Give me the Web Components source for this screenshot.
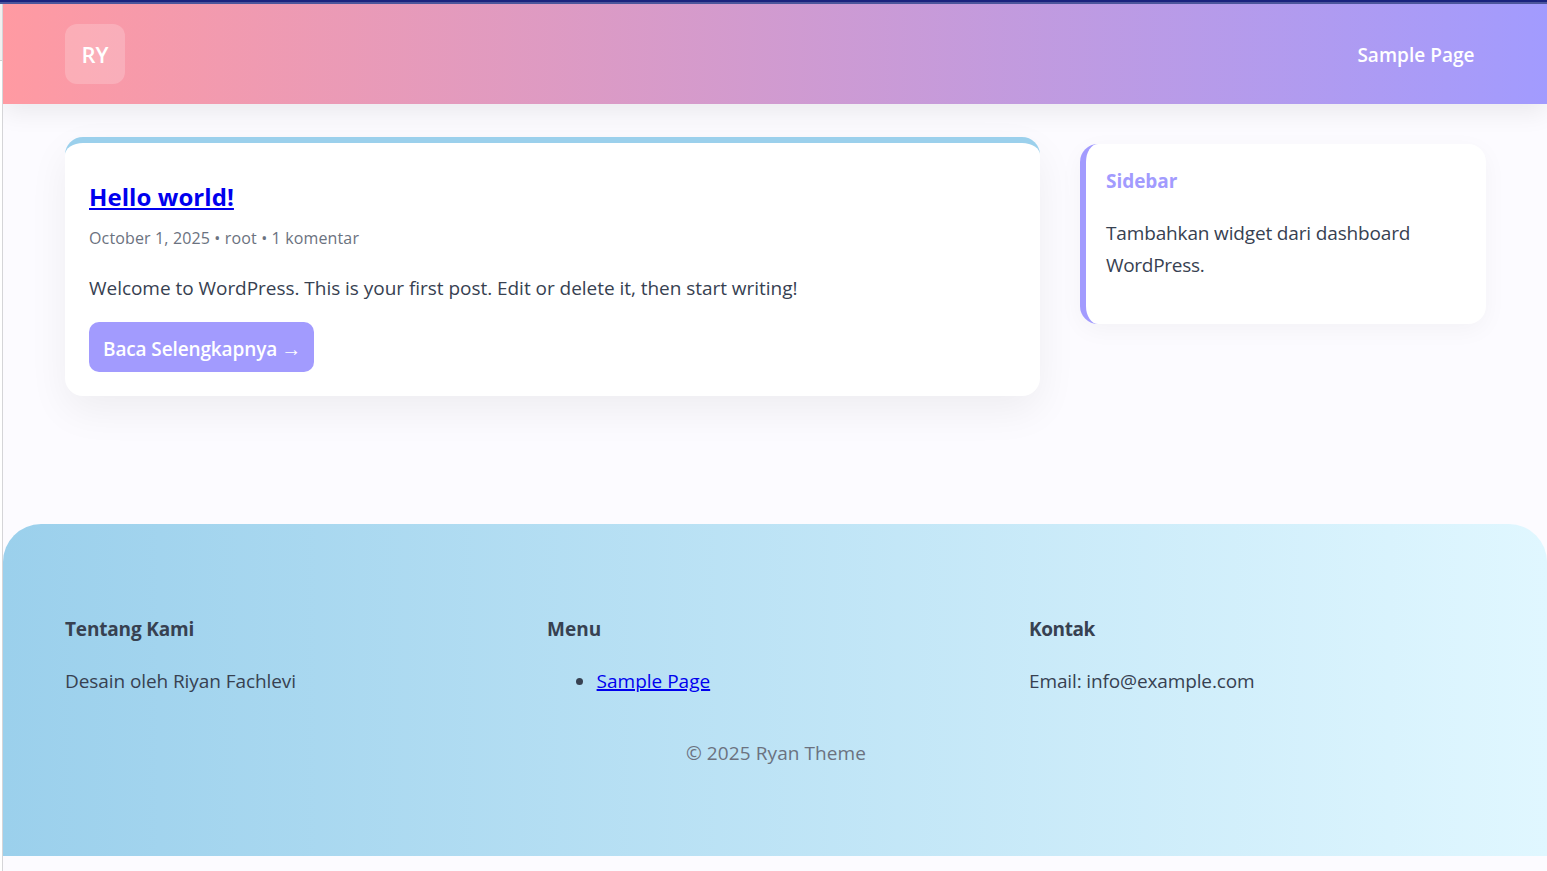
<!DOCTYPE html>
<html lang="id">
<head>
<meta charset="utf-8">
<title>Ryan Theme</title>
<style>
html,body{margin:0;height:100%}
body{font:400 19px/32px "Open Sans","Noto Sans",sans-serif;color:#374151;overflow:hidden}
</style>
</head>
<body>
<browser-frame>
  <site-header initials="RY"><a href="#">Sample Page</a></site-header>
  <site-main>
    <post-card heading="Hello world!" meta="October 1, 2025 • root • 1 komentar">Welcome to WordPress. This is your first post. Edit or delete it, then start writing!</post-card>
    <side-widget heading="Sidebar">Tambahkan widget dari dashboard <span style="letter-spacing:-.3px">WordPress.</span></side-widget>
  </site-main>
  <site-footer>
    <footer-column heading="Tentang Kami" style="--track:-.17px;letter-spacing:-.08px">Desain oleh Riyan Fachlevi</footer-column>
    <footer-column heading="Menu"><footer-menu label="Sample Page"></footer-menu></footer-column>
    <footer-column heading="Kontak" style="--track:-.4px;letter-spacing:-.13px">Email: info@example.com</footer-column>
    <span slot="copy">© 2025 Ryan Theme</span>
  </site-footer>
</browser-frame>
<script>
const define = (name, html) => customElements.define(name, class extends HTMLElement {
  constructor() {
    super();
    this.attachShadow({ mode: "open" }).innerHTML = html;
  }
  connectedCallback() {
    for (const el of this.shadowRoot.querySelectorAll("[data-attr]"))
      el.textContent = this.getAttribute(el.dataset.attr) || "";
  }
});

define("browser-frame", `<style>
:host{display:flex;flex-direction:column;height:871px}
.bar{height:2px;background:#1a237e;border-bottom:2px solid #4c559c;flex:none}
.row{display:flex;flex:1;min-height:0}
.edge{box-sizing:border-box;width:3px;flex:none;border-right:1px solid #d5d5d8;background:linear-gradient(#f0f0f0 56px,#d0d0d0 56px,#d0d0d0 57px,#fff 57px)}
.page{flex:1;min-width:0;background:#fcfbff;overflow:hidden}
</style><div class="bar"></div><div class="row"><div class="edge"></div><div class="page"><slot></slot></div></div>`);

define("site-header", `<style>
:host{display:flex;box-sizing:border-box;height:100px;padding:0 72.5px 0 62px;align-items:center;justify-content:space-between;background:linear-gradient(90deg,#ff9aa2,#a29bfe);box-shadow:0 8px 24px rgba(0,0,0,.075)}
.logo{width:60px;height:60px;border-radius:12px;background:rgba(255,255,255,.2);display:flex;align-items:center;justify-content:center;color:#fff;font-weight:600;font-size:22px;box-sizing:border-box}
::slotted(a){color:#fff;font-weight:600;text-decoration:none;letter-spacing:.03px;padding-top:2px}
</style><div class="logo" data-attr="initials"></div><slot></slot>`);

define("site-main", `<style>
:host{display:grid;grid-template-columns:975px 406px;gap:40px;padding:33px 0 0 62px;height:387px;align-items:start}
</style><slot></slot>`);

define("post-card", `<style>
:host{display:block;box-sizing:border-box;height:259px;border-top:6px solid #9bd0ec;border-radius:18px;background:#fff;padding:36px 24px 24px;box-shadow:0 15px 40px rgba(0,0,0,.06)}
h2{margin:0;font-size:24px;line-height:36px;letter-spacing:.08px}
h2 a{color:#00e}
.meta{margin-top:7px;font-size:16px;line-height:32px;letter-spacing:.14px;color:#6b7280}
p{margin:18px 0;letter-spacing:-.035px}
.btn{display:flex;box-sizing:border-box;width:225px;height:50px;padding:4px 0 0 14px;align-items:center;gap:4px;border-radius:10px;background:#a29bfe;color:#fff;font-weight:600;text-decoration:none;letter-spacing:-.12px;white-space:nowrap}
.arrow{font:400 20px/32px "Liberation Sans",sans-serif;letter-spacing:0}
</style><h2><a href="#" data-attr="heading"></a></h2><div class="meta" data-attr="meta"></div><p><slot></slot></p>
<a class="btn" href="#">Baca Selengkapnya <span class="arrow">→</span></a>`);

define("side-widget", `<style>
:host{display:block;box-sizing:border-box;height:180px;margin-top:7px;border-left:6px solid #a29bfe;border-radius:18px;background:#fff;padding:21px 20px 0;box-shadow:0 6px 24px rgba(0,0,0,.04)}
h3{margin:0 0 20px;font-size:19px;line-height:32px;letter-spacing:-.05px;color:#a29bfe}
p{margin:0;width:330px;letter-spacing:-.15px}
</style><h3 data-attr="heading"></h3><p><slot></slot></p>`);

define("site-footer", `<style>
:host{display:block;box-sizing:border-box;height:332px;padding:89px 61px 0 62px;border-radius:38px 38px 0 0;background:linear-gradient(90deg,#9bd0ec,#e0f7ff)}
.cols{display:grid;grid-template-columns:repeat(3,457px);column-gap:25px}
.copy{text-align:center;margin-top:40px;padding-left:1px;color:#6b7280;letter-spacing:.09px}
</style><div class="cols"><slot></slot></div><div class="copy"><slot name="copy"></slot></div>`);

define("footer-column", `<style>
:host{display:block}
h4{margin:0 0 20px;line-height:32px;font-size:19px;letter-spacing:var(--track,0)}
</style><h4 data-attr="heading"></h4><slot></slot>`);

define("footer-menu", `<style>
:host{display:block}
ul{margin:0;padding:0;list-style:none}
li{display:flex;align-items:center;padding-left:29px}
li::before{content:"";width:7px;height:7px;border-radius:50%;background:#374151;margin-right:13.6px;margin-top:1px}
a{color:#00e;text-decoration-thickness:2px}
</style><ul><li><a href="#" data-attr="label"></a></li></ul>`);
</script>
</body>
</html>
